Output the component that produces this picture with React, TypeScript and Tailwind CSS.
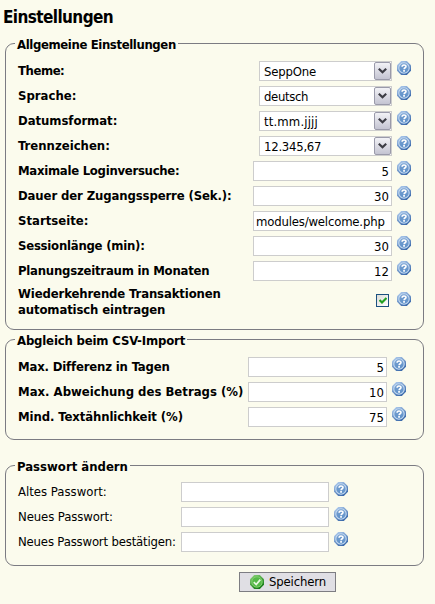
import type { ReactNode } from "react";

function HelpIcon({ className = "" }: { className?: string }) {
  return (
    <svg className={`ml-[5px] h-[14px] w-[14px] shrink-0 ${className}`} viewBox="0 0 14 14">
      <defs>
        <linearGradient id="ring" x1="0" y1="0" x2="0.6" y2="1">
          <stop offset="0" stopColor="#b9d4f3" />
          <stop offset="1" stopColor="#3a69aa" />
        </linearGradient>
        <linearGradient id="core" x1="0" y1="0" x2="0" y2="1">
          <stop offset="0" stopColor="#7ba3d2" />
          <stop offset="1" stopColor="#5c8fc8" />
        </linearGradient>
      </defs>
      <path d="M4.2 0h5.6L14 4.2v5.6L9.8 14H4.2L0 9.8V4.2z" fill="url(#ring)" />
      <circle cx="7" cy="7" r="5.2" fill="url(#core)" stroke="#c3d9f1" strokeWidth="1.1" />
      <path d="M5.1 5.7C5.1 3.5 9 3.5 9 5.5C9 6.8 7.1 6.7 7.1 8.2" fill="none" stroke="#fff" strokeWidth="1.6" />
      <path d="M6.2 9.1h1.7v1.6H6.2z" fill="#fff" />
    </svg>
  );
}

function Row({ label, tracking = "", bold = true, children }: { label: string; tracking?: string; bold?: boolean; children: ReactNode }) {
  return (
    <div className="flex h-[25px] items-start">
      <span className={`min-w-0 flex-1 whitespace-nowrap leading-[20px] ${bold ? "font-bold" : ""} ${tracking}`}>{label}</span>
      {children}
      <HelpIcon />
    </div>
  );
}

function Select({ value, tracking = "" }: { value: string; tracking?: string }) {
  return (
    <div className="flex h-[20px] w-[133px] shrink-0 border border-[#cdcdcd] bg-white">
      <span className={`flex-1 pl-[4px] leading-[20px] ${tracking}`}>{value}</span>
      <span className="flex h-[18px] w-[17px] items-center justify-center rounded-[2px] border border-[#9a9aaa] bg-linear-to-b from-[#f2f2f6] to-[#c4c4d2]">
        <svg className="h-[6px] w-[9px]" viewBox="0 0 9 6">
          <path d="M0.8 0.8L4.5 4.3L8.2 0.8" fill="none" stroke="#3c3c44" strokeWidth="2.2" />
        </svg>
      </span>
    </div>
  );
}

function Field({ value = "", wide = false, left = false }: { value?: string; wide?: boolean; left?: boolean }) {
  return (
    <div className={`h-[20px] shrink-0 whitespace-nowrap border border-[#cdcdcd] bg-white px-[2px] leading-[20px] ${wide ? "w-[148px]" : "w-[139px]"} ${left ? "text-left tracking-[-0.18px]" : "text-right"}`}>
      {value}
    </div>
  );
}

function Legend({ tracking = "", children }: { tracking?: string; children: ReactNode }) {
  return <legend className={`ml-[9px] h-[15px] whitespace-nowrap px-[2px] font-bold leading-[17px] ${tracking}`}>{children}</legend>;
}

const box = "ml-[5px] w-[419px] rounded-[9px] border border-[#7b7b82]";

export default function App() {
  return (
    <main className="h-[604px] w-[435px] overflow-hidden bg-[#fbfbed] font-['DejaVu_Sans_Condensed','DejaVu_Sans',sans-serif] text-[13px] text-black [font-stretch:condensed]">
      <h1 className="h-[36px] pl-[3px] pt-[6px] text-[17px] font-bold leading-[22px] tracking-[-0.6px]">Einstellungen</h1>
      <fieldset className={`${box} h-[294px]`}>
        <Legend tracking="tracking-[-0.38px]">Allgemeine Einstellungen</Legend>
        <div className="w-[405px] pl-[12px] pt-[10px]">
          <Row label="Theme:" tracking="tracking-[-0.45px]"><Select value="SeppOne" tracking="tracking-[-0.2px]" /></Row>
          <Row label="Sprache:"><Select value="deutsch" tracking="tracking-[-0.35px]" /></Row>
          <Row label="Datumsformat:" tracking="tracking-[-0.05px]"><Select value="tt.mm.jjjj" tracking="tracking-[0.15px]" /></Row>
          <Row label="Trennzeichen:"><Select value="12.345,67" tracking="tracking-[-0.25px]" /></Row>
          <Row label="Maximale Loginversuche:" tracking="tracking-[-0.28px]"><Field value="5" /></Row>
          <Row label="Dauer der Zugangssperre (Sek.):" tracking="tracking-[-0.12px]"><Field value="30" /></Row>
          <Row label="Startseite:"><Field value="modules/welcome.php" left /></Row>
          <Row label="Sessionlänge (min):" tracking="tracking-[-0.24px]"><Field value="30" /></Row>
          <Row label="Planungszeitraum in Monaten" tracking="tracking-[-0.23px]"><Field value="12" /></Row>
          <div className="flex items-start">
            <span className="flex-1 whitespace-nowrap font-bold leading-[16px] tracking-[-0.13px]">
              Wiederkehrende Transaktionen
              <br />
              automatisch eintragen
            </span>
            <span className="mr-[3px] mt-[8px] flex h-[13px] w-[13px] items-center justify-center border border-[#1c5180] bg-linear-to-br from-[#dcdcd7] to-white">
              <svg className="h-[8px] w-[8px]" viewBox="0 0 8 8">
                <path d="M0.5 3L3 5.5L7.5 1" fill="none" stroke="#21a121" strokeWidth="2.2" />
              </svg>
            </span>
            <HelpIcon className="mt-[6px]" />
          </div>
        </div>
      </fieldset>
      <fieldset className={`${box} mt-[2px] h-[108px]`}>
        <Legend tracking="tracking-[-0.17px]">Abgleich beim CSV-Import</Legend>
        <div className="w-[400px] pl-[12px] pt-[10px]">
          <Row label="Max. Differenz in Tagen" tracking="tracking-[-0.17px]"><Field value="5" /></Row>
          <Row label="Max. Abweichung des Betrags (%)"><Field value="10" /></Row>
          <Row label="Mind. Textähnlichkeit (%)" tracking="tracking-[-0.1px]"><Field value="75" /></Row>
        </div>
      </fieldset>
      <fieldset className={`${box} mt-[18px] h-[108px]`}>
        <Legend>Passwort ändern</Legend>
        <div className="w-[342px] pl-[12px] pt-[9px]">
          <Row label="Altes Passwort:" bold={false}><Field wide /></Row>
          <Row label="Neues Passwort:" bold={false} tracking="tracking-[-0.1px]"><Field wide /></Row>
          <Row label="Neues Passwort bestätigen:" bold={false} tracking="tracking-[-0.17px]"><Field wide /></Row>
        </div>
      </fieldset>
      <button className="ml-[239px] mt-[6px] flex h-[20px] w-[97px] items-center border border-[#7d7d82] bg-[#e0dfe4] pl-[10px]">
        <svg className="h-[14px] w-[14px]" viewBox="0 0 14 14">
          <defs>
            <linearGradient id="green" x1="0" y1="0" x2="0.6" y2="1">
              <stop offset="0" stopColor="#8fd67c" />
              <stop offset="1" stopColor="#167a16" />
            </linearGradient>
          </defs>
          <path d="M4.2 0h5.6L14 4.2v5.6L9.8 14H4.2L0 9.8V4.2z" fill="url(#green)" />
          <circle cx="7" cy="7" r="5.2" fill="#55b948" stroke="#7fd06c" strokeWidth="1" />
          <path d="M3.8 7.2L6.2 9.5L10.3 4.6" fill="none" stroke="#e8f8e0" strokeWidth="1.7" />
        </svg>
        <span className="ml-[5px] leading-[18px] tracking-[-0.15px]">Speichern</span>
      </button>
    </main>
  );
}
